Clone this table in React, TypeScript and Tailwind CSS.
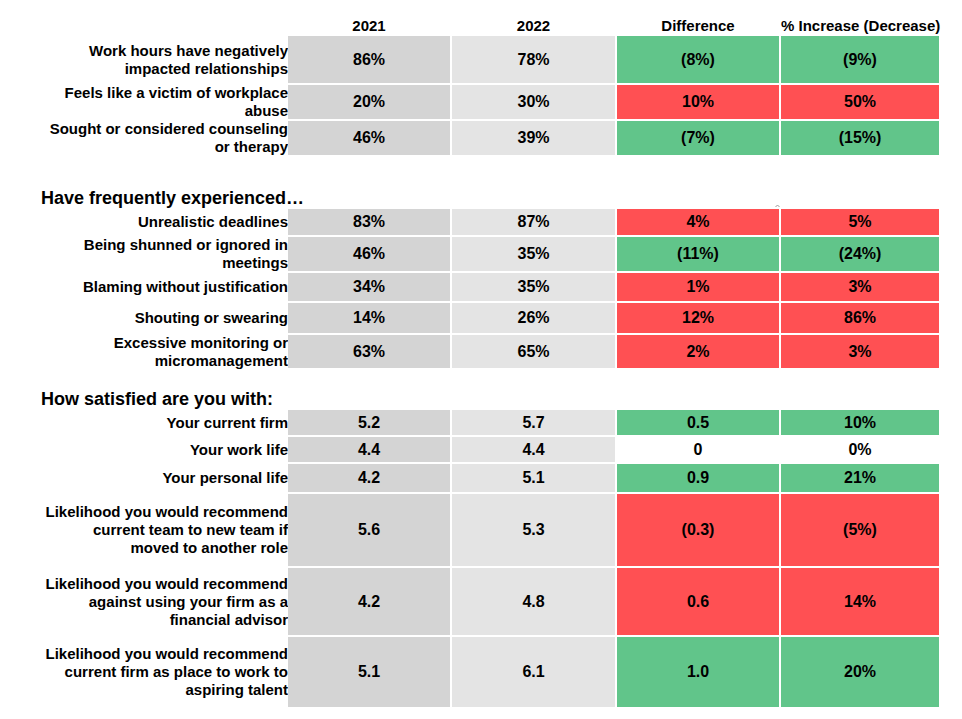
type Tone = 'good' | 'bad' | 'none';

interface Row {
  label: string[];
  h: number;
  y1: string;
  y2: string;
  diff: string;
  pct: string;
  tone: Tone;
}

const toneBg: Record<Tone, string> = {
  good: 'bg-[#61c58a]',
  bad: 'bg-[#ff5053]',
  none: 'bg-white',
};

const impact: Row[] = [
  { label: ['Work hours have negatively', 'impacted relationships'], h: 47, y1: '86%', y2: '78%', diff: '(8%)', pct: '(9%)', tone: 'good' },
  { label: ['Feels like a victim of workplace', 'abuse'], h: 34, y1: '20%', y2: '30%', diff: '10%', pct: '50%', tone: 'bad' },
  { label: ['Sought or considered counseling', 'or therapy'], h: 34, y1: '46%', y2: '39%', diff: '(7%)', pct: '(15%)', tone: 'good' },
];

const experienced: Row[] = [
  { label: ['Unrealistic deadlines'], h: 26, y1: '83%', y2: '87%', diff: '4%', pct: '5%', tone: 'bad' },
  { label: ['Being shunned or ignored in', 'meetings'], h: 34, y1: '46%', y2: '35%', diff: '(11%)', pct: '(24%)', tone: 'good' },
  { label: ['Blaming without justification'], h: 28, y1: '34%', y2: '35%', diff: '1%', pct: '3%', tone: 'bad' },
  { label: ['Shouting or swearing'], h: 30, y1: '14%', y2: '26%', diff: '12%', pct: '86%', tone: 'bad' },
  { label: ['Excessive monitoring or', 'micromanagement'], h: 33, y1: '63%', y2: '65%', diff: '2%', pct: '3%', tone: 'bad' },
];

const satisfied: Row[] = [
  { label: ['Your current firm'], h: 25, y1: '5.2', y2: '5.7', diff: '0.5', pct: '10%', tone: 'good' },
  { label: ['Your work life'], h: 25, y1: '4.4', y2: '4.4', diff: '0', pct: '0%', tone: 'none' },
  { label: ['Your personal life'], h: 28, y1: '4.2', y2: '5.1', diff: '0.9', pct: '21%', tone: 'good' },
  { label: ['Likelihood you would recommend', 'current team to new team if', 'moved to another role'], h: 72, y1: '5.6', y2: '5.3', diff: '(0.3)', pct: '(5%)', tone: 'bad' },
  { label: ['Likelihood you would recommend', 'against using your firm as a', 'financial advisor'], h: 67, y1: '4.2', y2: '4.8', diff: '0.6', pct: '14%', tone: 'bad' },
  { label: ['Likelihood you would recommend', 'current firm as place to work to', 'aspiring talent'], h: 70, y1: '5.1', y2: '6.1', diff: '1.0', pct: '20%', tone: 'good' },
];

function TableRow({ row }: { row: Row }) {
  const cell = 'flex items-center justify-center text-[16px]';
  return (
    <div className="flex" style={{ height: row.h }}>
      <div className="w-[288px] flex items-center justify-end text-right text-[15px] leading-[18px] whitespace-nowrap">
        <p>
          {row.label.map((line, i) => (
            <span key={i}>
              {i > 0 && <br />}
              {line}
            </span>
          ))}
        </p>
      </div>
      <div className={`w-[162px] bg-[#d4d4d4] ${cell}`}>{row.y1}</div>
      <div className={`w-[163px] ml-[2px] bg-[#e4e4e4] ${cell}`}>{row.y2}</div>
      <div className={`w-[162px] ml-[2px] ${toneBg[row.tone]} ${cell}`}>{row.diff}</div>
      <div className={`w-[158px] ml-[2px] ${toneBg[row.tone]} ${cell}`}>{row.pct}</div>
    </div>
  );
}

function Rows({ rows }: { rows: Row[] }) {
  return (
    <div className="flex flex-col gap-[2px]">
      {rows.map((r, i) => (
        <TableRow key={i} row={r} />
      ))}
    </div>
  );
}

export default function App() {
  return (
    <div className="relative w-[962px] h-[719px] bg-white text-black font-bold font-['Liberation_Sans',Arial,sans-serif] overflow-hidden">
      {/* column headings */}
      <div className="flex pt-[16px] text-[15px] leading-[20px]">
        <div className="w-[288px]" />
        <div className="w-[162px] text-center">2021</div>
        <div className="w-[163px] ml-[2px] text-center">2022</div>
        <div className="w-[162px] ml-[2px] text-center">Difference</div>
        <div className="w-[158px] ml-[2px] text-center whitespace-nowrap">% Increase (Decrease)</div>
      </div>

      <Rows rows={impact} />

      <h2 className="mt-[33px] pl-[41px] text-[18px] leading-[21px]">Have frequently experienced…</h2>
      <Rows rows={experienced} />

      <h2 className="mt-[21px] pl-[41px] text-[18px] leading-[21px]">How satisfied are you with:</h2>
      <Rows rows={satisfied} />

      {/* small cursor mark over the table */}
      <svg className="absolute left-[775px] top-[204px]" width="5" height="4" viewBox="0 0 5 4">
        <path d="M0.5 3 L2.5 1 L4.5 3" stroke="#9a9a9a" strokeWidth="1" fill="none" />
      </svg>
    </div>
  );
}
